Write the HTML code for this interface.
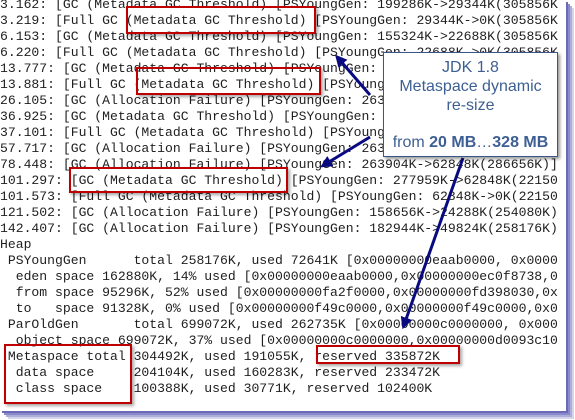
<!DOCTYPE html>
<html><head><meta charset="utf-8">
<style>
html,body{margin:0;padding:0;background:#fff;width:575px;height:420px;overflow:hidden;position:relative}
.page{position:absolute;left:0;top:0;width:566px;height:411px;background:#fff;
 box-shadow:2px 2px 0 #6a6ab8,4px 4px 0 #8a8acb,6px 6px 0 #adadd9,8px 8px 0 #d4d4ea;overflow:hidden}
pre{position:absolute;left:0;top:-3px;margin:0;font-family:"Liberation Mono",monospace;font-size:13.1px;line-height:16px;color:#1e1e1e;white-space:pre}
.rb{position:absolute;border:2px solid #c00000;box-shadow:2px 2px 3px rgba(0,0,0,.35)}
.call{position:absolute;left:383px;top:52px;width:173px;height:103px;border:1px solid #3b5588;background:#fff;box-shadow:2px 2px 3px rgba(0,0,0,.4);
 font-family:"Liberation Sans",sans-serif;color:#3d5f93;text-align:center;font-size:16px;line-height:19px}
</style></head><body>
<div class="page">
<pre>3.162: [GC (Metadata GC Threshold) [PSYoungGen: 199286K-&gt;29344K(305856K
3.219: [Full GC (Metadata GC Threshold) [PSYoungGen: 29344K-&gt;0K(305856K
6.153: [GC (Metadata GC Threshold) [PSYoungGen: 155324K-&gt;22688K(305856K
6.220: [Full GC (Metadata GC Threshold) [PSYoungGen: 22688K-&gt;0K(305856K
13.777: [GC (Metadata GC Threshold) [PSYoungGen: 263904K-&gt;62848K(286656
13.881: [Full GC (Metadata GC Threshold) [PSYoungGen: 62848K-&gt;0K(286656
26.105: [GC (Allocation Failure) [PSYoungGen: 263904K-&gt;62848K(286656K)]
36.925: [GC (Metadata GC Threshold) [PSYoungGen: 263904K-&gt;62848K(286656
37.101: [Full GC (Metadata GC Threshold) [PSYoungGen: 62848K-&gt;0K(286656
57.717: [GC (Allocation Failure) [PSYoungGen: 263904K-&gt;62848K(286656K)]
78.448: [GC (Allocation Failure) [PSYoungGen: 263904K-&gt;62848K(286656K)]
101.297: [GC (Metadata GC Threshold) [PSYoungGen: 277959K-&gt;62848K(22150
101.573: [Full GC (Metadata GC Threshold) [PSYoungGen: 62848K-&gt;0K(22150
121.502: [GC (Allocation Failure) [PSYoungGen: 158656K-&gt;24288K(254080K)
142.407: [GC (Allocation Failure) [PSYoungGen: 182944K-&gt;49824K(258176K)
Heap
 PSYoungGen      total 258176K, used 72641K [0x00000000eaab0000, 0x0000
  eden space 162880K, 14% used [0x00000000eaab0000,0x00000000ec0f8738,0
  from space 95296K, 52% used [0x00000000fa2f0000,0x00000000fd398030,0x
  to   space 91328K, 0% used [0x00000000f49c0000,0x00000000f49c0000,0x0
 ParOldGen       total 699072K, used 262735K [0x00000000c0000000, 0x000
  object space 699072K, 37% used [0x00000000c0000000,0x00000000d0093c10
 Metaspace total 304492K, used 191055K, reserved 335872K
  data space     204104K, used 160283K, reserved 233472K
  class space    100388K, used 30771K, reserved 102400K</pre>
<div class="rb" style="left:126px;top:6px;width:186px;height:24px"></div>
<div class="rb" style="left:136px;top:67px;width:181px;height:24px"></div>
<div class="rb" style="left:69px;top:167px;width:215px;height:22px"></div>
<div class="rb" style="left:4px;top:344px;width:124px;height:56px"></div>
<div class="rb" style="left:316px;top:345px;width:140px;height:15px"></div>
<svg style="position:absolute;left:0;top:0" width="566" height="411">
<defs><marker id="a" markerWidth="4" markerHeight="4" refX="2.5" refY="2" orient="auto"><path d="M0,0 L4,2 L0,4 Z" fill="#0a0a80"/></marker></defs>
<g stroke="#0a0a80" stroke-width="3" fill="none" marker-end="url(#a)">
<line x1="370" y1="95" x2="338" y2="58"/>
<line x1="370" y1="137" x2="324" y2="165"/>
<line x1="463" y1="158" x2="404" y2="325"/>
</g></svg>
<div class="call"><div style="padding-top:5px">JDK 1.8</div><div>Metaspace dynamic</div><div>re-size</div><div style="margin-top:18px">from <b>20 MB</b>…<b>328 MB</b></div></div>
</div>
</body></html>
